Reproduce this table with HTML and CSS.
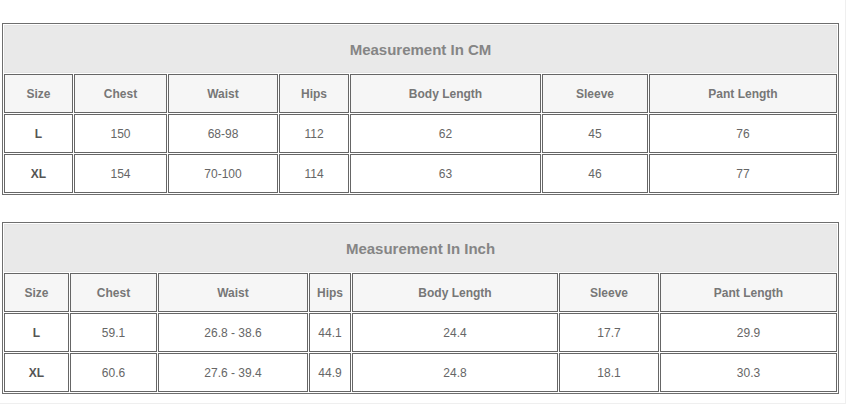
FILE: index.html
```html
<!DOCTYPE html>
<html>
<head>
<meta charset="utf-8">
<link rel="stylesheet" href="styles.css">
</head>
<body>
<div class="page">
  <table class="size-table">
    <colgroup>
      <col class="c1-size"><col class="c1-chest"><col class="c1-waist"><col class="c1-hips"><col class="c1-body"><col class="c1-sleeve"><col class="c1-pant">
    </colgroup>
    <tr><td class="title" colspan="7">Measurement In CM</td></tr>
    <tr class="head">
      <td>Size</td><td>Chest</td><td>Waist</td><td>Hips</td><td>Body Length</td><td>Sleeve</td><td>Pant Length</td>
    </tr>
    <tr>
      <td class="sz">L</td><td>150</td><td>68-98</td><td>112</td><td>62</td><td>45</td><td>76</td>
    </tr>
    <tr>
      <td class="sz">XL</td><td>154</td><td>70-100</td><td>114</td><td>63</td><td>46</td><td>77</td>
    </tr>
  </table>

  <table class="size-table second">
    <colgroup>
      <col class="c2-size"><col class="c2-chest"><col class="c2-waist"><col class="c2-hips"><col class="c2-body"><col class="c2-sleeve"><col class="c2-pant">
    </colgroup>
    <tr><td class="title" colspan="7">Measurement In Inch</td></tr>
    <tr class="head">
      <td>Size</td><td>Chest</td><td>Waist</td><td>Hips</td><td>Body Length</td><td>Sleeve</td><td>Pant Length</td>
    </tr>
    <tr>
      <td class="sz">L</td><td>59.1</td><td>26.8 - 38.6</td><td>44.1</td><td>24.4</td><td>17.7</td><td>29.9</td>
    </tr>
    <tr>
      <td class="sz">XL</td><td>60.6</td><td>27.6 - 39.4</td><td>44.9</td><td>24.8</td><td>18.1</td><td>30.3</td>
    </tr>
  </table>
</div>
</body>
</html>
```

FILE: styles.css
```css
html, body {
  margin: 0;
  padding: 0;
  background: #ffffff;
}

body {
  font-family: "Liberation Sans", Arial, sans-serif;
}

.page {
  box-sizing: border-box;
  width: 846px;
  height: 404px;
  padding: 23px 0 0 2px;
  border-right: 1px solid #efefef;
  border-bottom: 1px solid #efefef;
}

.size-table {
  table-layout: fixed;
  width: 837px;
  border: 1px solid #6e6e6e;
  border-collapse: separate;
  border-spacing: 1px;
}

.size-table.second {
  margin-top: 27px;
}

.size-table td {
  box-sizing: border-box;
  height: 39px;
  padding: 0;
  border: 1px solid #666666;
  text-align: center;
  vertical-align: middle;
  font-size: 12px;
  color: #666666;
  background: #ffffff;
}

.size-table td.title {
  height: 48px;
  border: 1px solid #e4e4e4;
  background: #e9e9e9;
  font-size: 15px;
  font-weight: bold;
  color: #858585;
}

.size-table .head td {
  background: #f6f6f6;
  font-weight: bold;
  color: #777777;
}

.size-table td.sz {
  font-weight: bold;
  color: #555555;
}

.c1-size { width: 69px; }
.c1-chest { width: 93px; }
.c1-waist { width: 110px; }
.c1-hips { width: 70px; }
.c1-body { width: 191px; }
.c1-sleeve { width: 106px; }
.c1-pant { width: 188px; }

.c2-size { width: 65px; }
.c2-chest { width: 87px; }
.c2-waist { width: 150px; }
.c2-hips { width: 42px; }
.c2-body { width: 206px; }
.c2-sleeve { width: 100px; }
.c2-pant { width: 177px; }
```
